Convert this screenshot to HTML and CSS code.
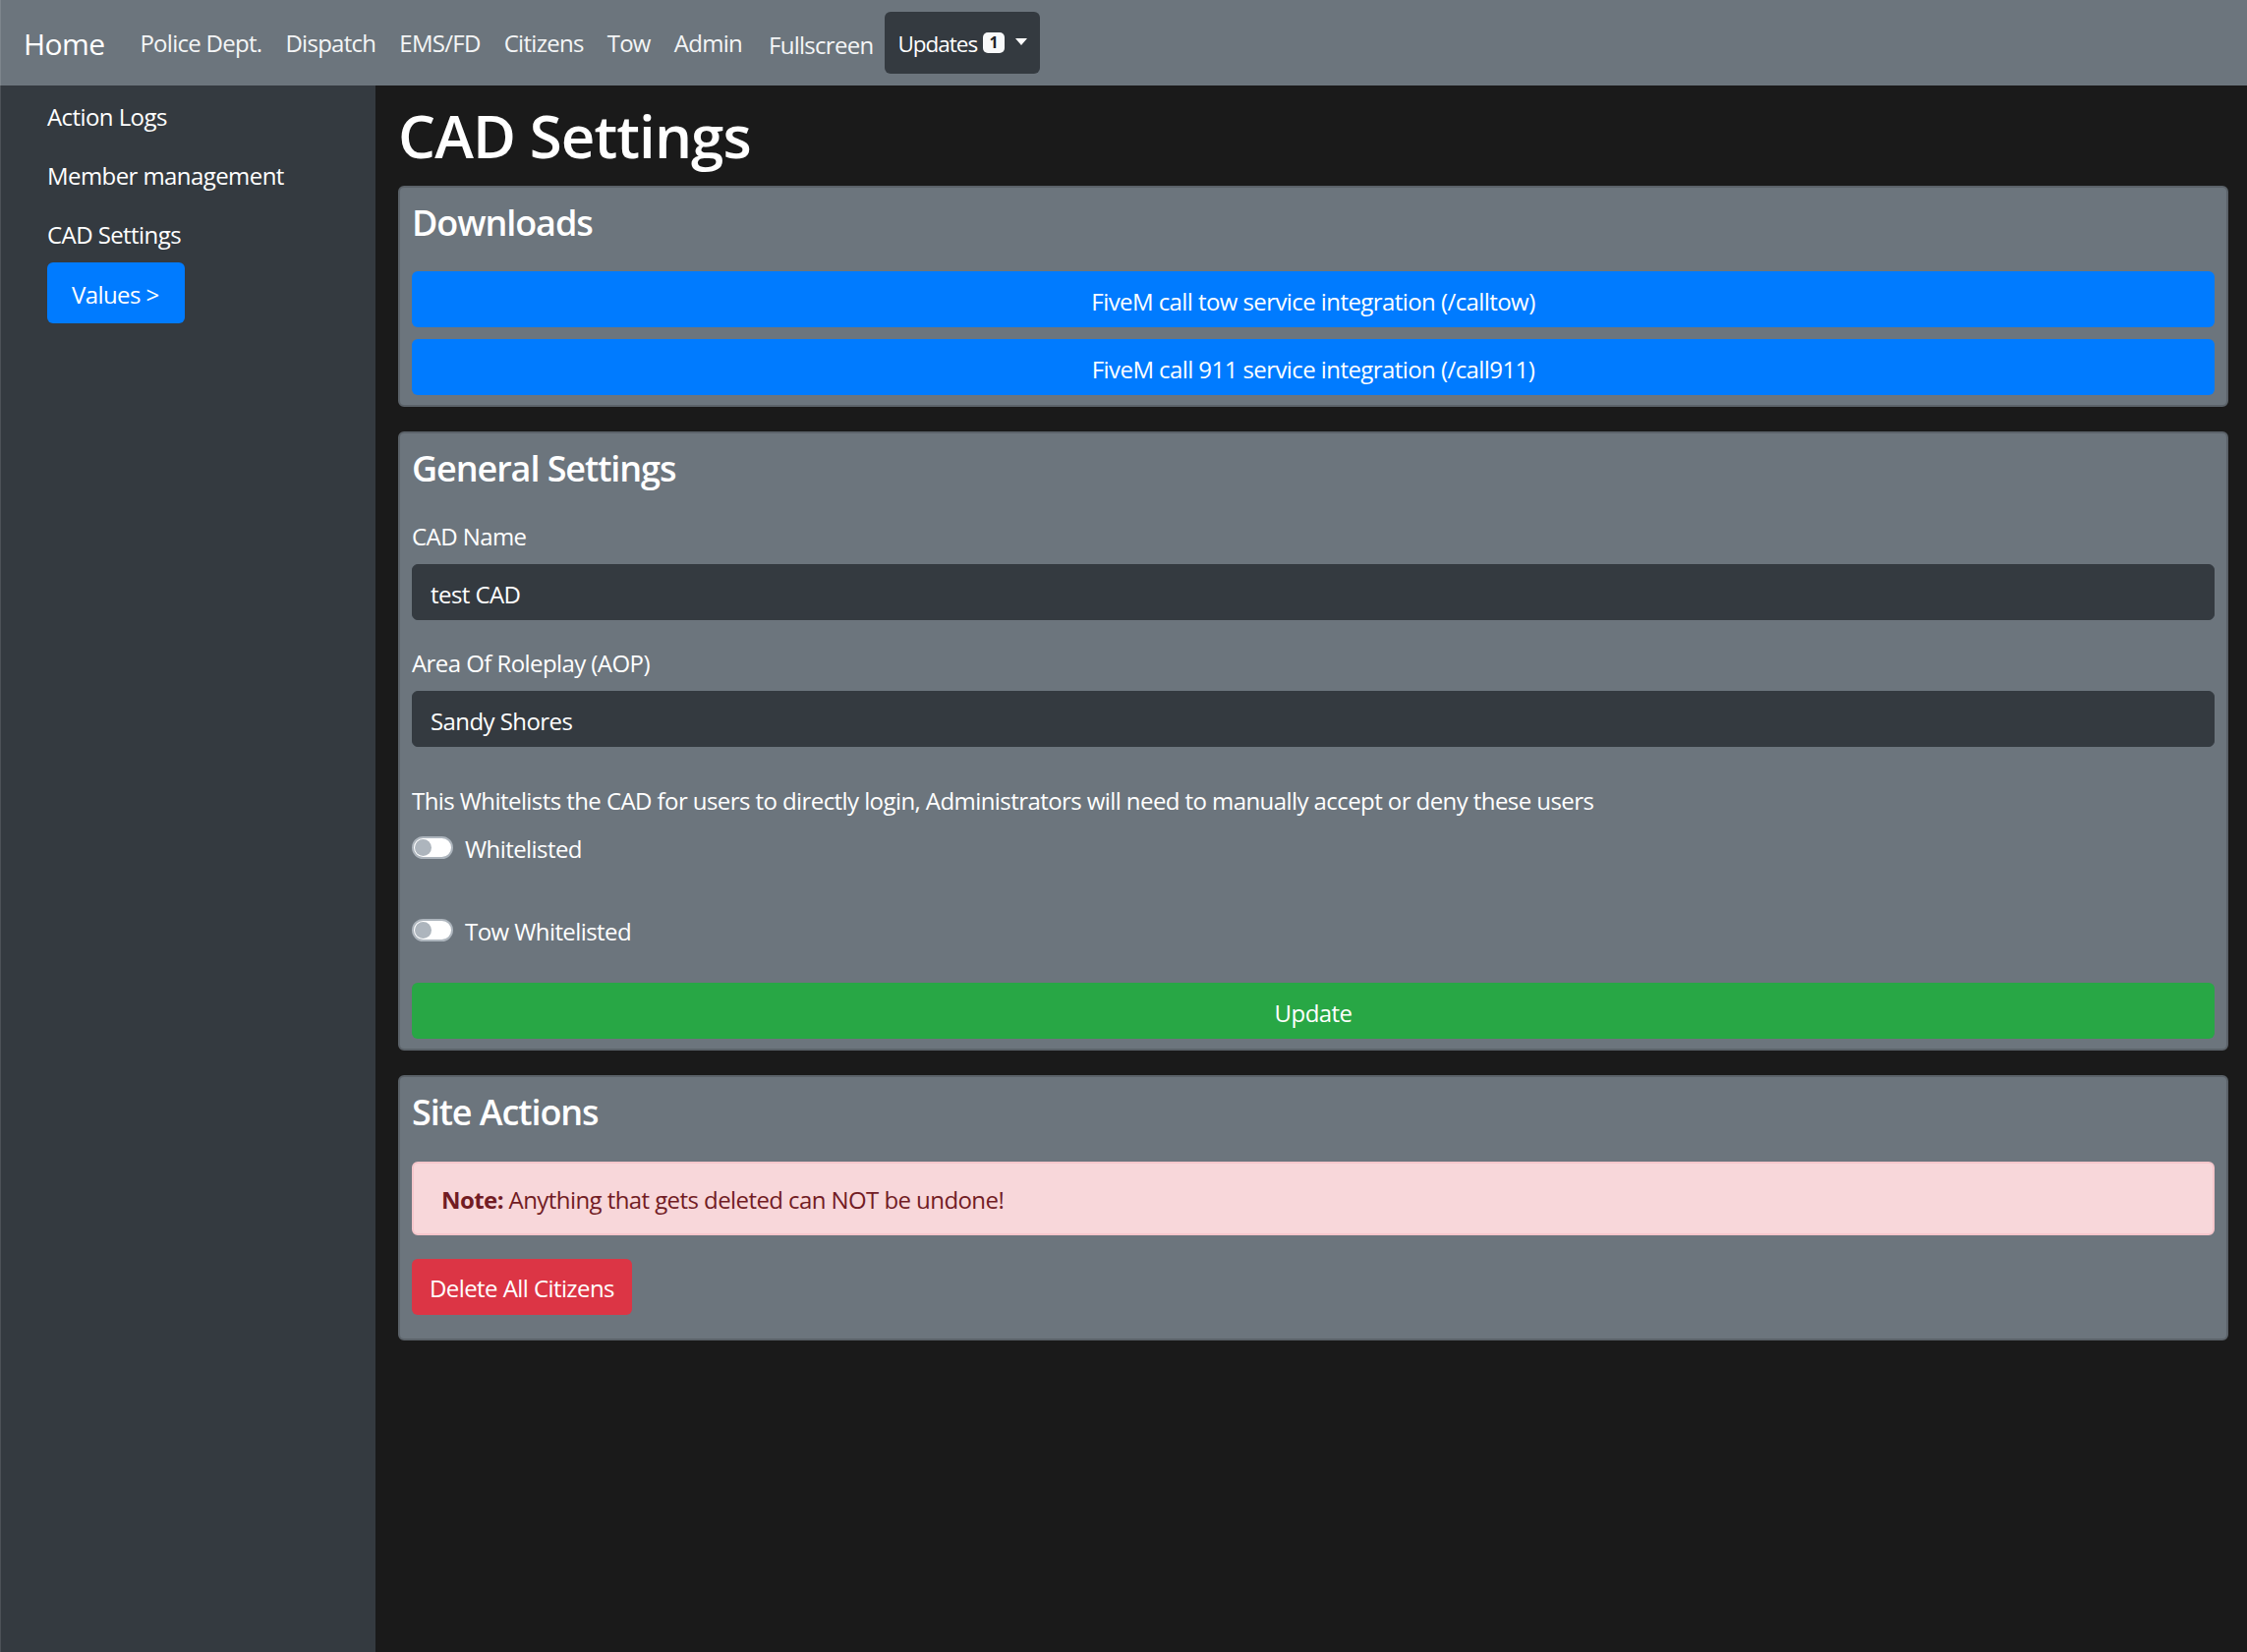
FILE: index.html
```html
<!DOCTYPE html>
<html lang="en">
<head>
<meta charset="utf-8">
<title>CAD Settings</title>
<link rel="stylesheet" href="styles.css">
</head>
<body>
<nav class="topbar">
  <a class="brand" href="#">Home</a>
  <ul class="nav-links">
    <li><a class="nav-link" href="#">Police Dept.</a></li>
    <li><a class="nav-link" href="#">Dispatch</a></li>
    <li><a class="nav-link" href="#">EMS/FD</a></li>
    <li><a class="nav-link" href="#">Citizens</a></li>
    <li><a class="nav-link" href="#">Tow</a></li>
    <li><a class="nav-link" href="#">Admin</a></li>
  </ul>
  <a class="nav-link fullscreen" href="#">Fullscreen</a>
  <button class="updates" type="button">Updates<span class="badge">1</span><span class="caret"></span></button>
</nav>
<div class="layout">
  <aside class="sidebar">
    <a class="side-link" href="#">Action Logs</a>
    <a class="side-link" href="#">Member management</a>
    <a class="side-link" href="#">CAD Settings</a>
    <a class="side-btn" href="#">Values &gt;</a>
  </aside>
  <main class="main">
    <h1 class="page-title">CAD Settings</h1>

    <section class="card">
      <h4 class="card-title">Downloads</h4>
      <a class="btn btn-blue" href="#">FiveM call tow service integration (/calltow)</a>
      <a class="btn btn-blue btn-next" href="#">FiveM call 911 service integration (/call911)</a>
    </section>

    <section class="card">
      <h4 class="card-title">General Settings</h4>
      <div class="group">
        <label class="label">CAD Name</label>
        <input class="field" type="text" value="test CAD">
      </div>
      <div class="group">
        <label class="label">Area Of Roleplay (AOP)</label>
        <input class="field" type="text" value="Sandy Shores">
      </div>
      <p class="hint">This Whitelists the CAD for users to directly login, Administrators will need to manually accept or deny these users</p>
      <div class="switch-row first">
        <span class="switch"><span class="knob"></span></span>
        <span>Whitelisted</span>
      </div>
      <div class="switch-row second">
        <span class="switch"><span class="knob"></span></span>
        <span>Tow Whitelisted</span>
      </div>
      <a class="btn btn-green" href="#">Update</a>
    </section>

    <section class="card card-last">
      <h4 class="card-title">Site Actions</h4>
      <div class="alert"><strong>Note:</strong> Anything that gets deleted can NOT be undone!</div>
      <a class="btn btn-red" href="#">Delete All Citizens</a>
    </section>
  </main>
</div>
</body>
</html>
```
FILE: styles.css
```css
* {
  box-sizing: border-box;
}

html,
body {
  margin: 0;
  padding: 0;
}

body {
  font-family: "Open Sans", "Liberation Sans", sans-serif;
  font-size: 24px;
  line-height: 36px;
  color: #fff;
  background: #1a1a1a;
  letter-spacing: -0.024em;
}

body::before {
  content: "";
  position: fixed;
  left: 0;
  top: 0;
  bottom: 0;
  width: 1px;
  background: rgba(255, 255, 255, 0.12);
  z-index: 10;
}

/* Top navbar */
.topbar {
  height: 87px;
  background: #6c757d;
  display: flex;
  align-items: center;
  padding: 0 24px;
}

.brand {
  font-size: 30px;
  line-height: 45px;
  padding-top: 2px;
  color: #fff;
  text-decoration: none;
  margin-right: 24px;
  letter-spacing: -0.02em;
}

.nav-links {
  display: flex;
  list-style: none;
  margin: 0;
  padding: 0;
}

.nav-link {
  display: block;
  padding: 1px 12px 0;
  color: #f4f5f6;
  text-decoration: none;
  letter-spacing: -0.03em;
}

.fullscreen {
  margin-top: 4px;
  margin-left: 3px;
}

.updates {
  display: flex;
  align-items: center;
  height: 63px;
  margin-left: 0;
  padding: 2px 13px 0 13px;
  background: #343a40;
  border: 0;
  border-radius: 6px;
  color: #fff;
  font: inherit;
  font-size: 22.5px;
  letter-spacing: -0.045em;
}

.badge {
  display: inline-block;
  width: 22px;
  height: 21px;
  line-height: 21px;
  margin-left: 6px;
  margin-bottom: 2px;
  background: #f8f9fa;
  color: #212529;
  font-size: 16px;
  font-weight: 700;
  text-align: center;
  border-radius: 5px;
  letter-spacing: 0;
}

.caret {
  width: 0;
  height: 0;
  margin-left: 11px;
  margin-bottom: 5px;
  border-top: 7px solid #fff;
  border-left: 6.5px solid transparent;
  border-right: 6.5px solid transparent;
}

/* Layout */
.layout {
  display: flex;
  min-height: calc(100vh - 87px);
}

.sidebar {
  width: 382px;
  flex: none;
  background: #343a40;
  padding-left: 48px;
}

.side-link {
  display: block;
  padding: 14px 0 10px;
  color: #fff;
  text-decoration: none;
}

.side-btn {
  display: inline-block;
  padding: 15px 26px 11px 25px;
  background: #007bff;
  border-radius: 6px;
  color: #fff;
  text-decoration: none;
}

.main {
  flex: 1;
  min-width: 0;
  padding: 15px 19px 40px 23px;
}

.page-title {
  font-size: 60px;
  line-height: 72px;
  font-weight: 600;
  margin: 0 0 15px;
  letter-spacing: -0.015em;
}

/* Cards */
.card {
  background: #6c757d;
  border: 2px solid #5b6269;
  border-radius: 6px;
  padding: 12px 12px 10px;
  margin-bottom: 25px;
}

.card-title {
  font-size: 36px;
  line-height: 43.2px;
  font-weight: 600;
  padding-top: 2px;
  margin: 0 0 28px;
  letter-spacing: -0.03em;
}

.btn {
  display: block;
  height: 57px;
  padding: 12.5px 18px 8.5px;
  line-height: 36px;
  border-radius: 6px;
  text-align: center;
  color: #fff;
  text-decoration: none;
}

.btn-blue {
  background: #007bff;
}

.btn-next {
  margin-top: 12px;
}

.btn-green {
  background: #28a745;
}

.btn-red {
  display: inline-block;
  background: #dc3545;
  margin-bottom: 14px;
}

/* Form */
.group {
  margin-bottom: 24px;
}

.label {
  display: block;
  padding-top: 2px;
  margin-bottom: 10px;
}

.field {
  display: block;
  width: 100%;
  height: 57px;
  padding: 3px 18px 0;
  background: #343a40;
  border: 1px solid #343a40;
  border-radius: 6px;
  color: #fff;
  font: inherit;
  letter-spacing: inherit;
  outline: none;
}

.hint {
  padding-top: 2px;
  margin: 35px 0 11px;
}

.switch-row {
  display: flex;
  align-items: flex-start;
  gap: 12px;
  padding-top: 2px;
}

.switch-row.first {
  margin-bottom: 46px;
}

.switch-row.second {
  margin-bottom: 34px;
}

.switch {
  flex: none;
  width: 42px;
  height: 23px;
  margin-top: 5px;
  border: 2px solid #adb5bd;
  border-radius: 12px;
  background: #fff;
  display: flex;
  align-items: center;
}

.knob {
  width: 17px;
  height: 17px;
  margin-left: 1px;
  border-radius: 50%;
  background: #adb5bd;
}

/* Alert */
.alert {
  background: #f8d7da;
  border: 2px solid #f5c6cb;
  color: #721c24;
  border-radius: 6px;
  padding: 19.5px 28px 15.5px;
  margin-bottom: 24px;
}

.alert strong {
  font-weight: 700;
}
```
